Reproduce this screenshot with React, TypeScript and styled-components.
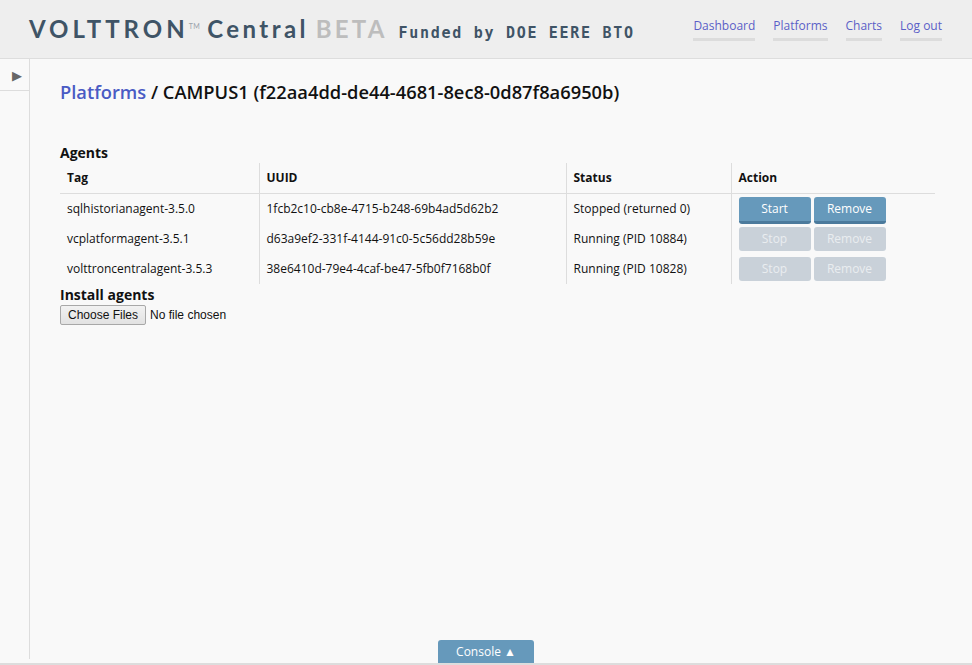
import styled, { createGlobalStyle } from 'styled-components';

const GlobalStyle = createGlobalStyle`
    html, body {
        margin: 0;
        padding: 0;
        height: 100%;
        background: #f9f9f9;
        font-family: "Open Sans", "Liberation Sans", sans-serif;
        color: #111;
        overflow: hidden;
    }
`;

const Page = styled.div`
    display: flex;
    flex-direction: column;
    height: 665px;
`;

const Header = styled.header`
    display: flex;
    justify-content: space-between;
    align-items: flex-start;
    height: 58px;
    padding: 0 30px 0 29px;
    background: #eeeeee;
    border-bottom: 1px solid #dddddd;
    box-sizing: content-box;
`;

const Logo = styled.div`
    display: flex;
    align-items: baseline;
    padding-top: 14px;
    color: #3f5466;
    white-space: nowrap;
`;

const LogoWord = styled.span<{ $muted?: boolean; $wide?: boolean }>`
    font-family: Lato, "Open Sans", sans-serif;
    font-weight: 700;
    font-size: 24px;
    letter-spacing: ${(p) => (p.$wide ? '4px' : p.$muted ? '3.2px' : '3.4px')};
    color: ${(p) => (p.$muted ? '#bdbdbd' : '#3f5466')};
    margin-right: ${(p) => (p.$wide ? '0' : '7px')};
`;

const Trademark = styled.span`
    align-self: flex-start;
    font-family: Lato, sans-serif;
    font-size: 7px;
    letter-spacing: 0.5px;
    color: #9aa3ab;
    margin: 8px 7px 0 0;
`;

const Funded = styled.span`
    font-family: "DejaVu Sans Mono", "Liberation Mono", monospace;
    font-weight: 700;
    font-size: 15px;
    letter-spacing: 1.7px;
    color: #3f5466;
    margin-left: 4px;
`;

const Nav = styled.nav`
    display: flex;
    gap: 18px;
    padding-top: 17px;
`;

const NavLink = styled.a`
    font-size: 12px;
    color: #5b5fc7;
    text-decoration: none;
    padding-bottom: 4px;
    border-bottom: 3px solid #dcdcdc;
    line-height: 17px;
`;

const Body = styled.div`
    display: flex;
    flex: 1;
    min-height: 0;
`;

const Sidebar = styled.aside`
    width: 29px;
    border-right: 1px solid #dddddd;
    margin-bottom: 6px;
`;

const Toggle = styled.div`
    height: 31px;
    border-bottom: 1px solid #dddddd;
    display: flex;
    align-items: center;
    justify-content: center;
    color: #666;
    font-size: 13px;
    padding-left: 4px;
`;

const Content = styled.main`
    flex: 1;
    padding: 20px 37px 0 30px;
`;

const Title = styled.h1`
    margin: 0;
    font-size: 18.3px;
    font-weight: 600;
    line-height: 26px;
    color: #111;
`;

const TitleLink = styled.a`
    color: #4a5bc4;
    text-decoration: none;
`;

const SectionHeading = styled.h3<{ $top: number }>`
    margin: ${(p) => p.$top}px 0 0;
    font-size: 14px;
    font-weight: 700;
    line-height: 19px;
`;

const Table = styled.table`
    width: 100%;
    margin-top: 1px;
    border-collapse: collapse;
    table-layout: fixed;
    font-size: 12px;
`;

const Th = styled.th<{ $w?: number }>`
    box-sizing: border-box;
    text-align: left;
    font-weight: 700;
    height: 30px;
    padding: 0 7px;
    line-height: 17px;
    width: ${(p) => (p.$w ? `${p.$w}px` : 'auto')};
    border-bottom: 1px solid #dddddd;
    border-left: 1px solid #dddddd;
    &:first-child {
        border-left: none;
    }
`;

const Td = styled.td<{ $action?: boolean }>`
    box-sizing: border-box;
    height: 30px;
    padding: 0 7px;
    line-height: 17px;
    border-left: 1px solid #dddddd;
    vertical-align: ${(p) => (p.$action ? 'top' : 'middle')};
    white-space: nowrap;
    &:first-child {
        border-left: none;
    }
`;

const Actions = styled.div`
    display: flex;
    gap: 3px;
    height: 30px;
    padding-top: 3px;
    box-sizing: border-box;
`;

const ActionButton = styled.button<{ $enabled: boolean }>`
    width: 72px;
    height: ${(p) => (p.$enabled ? '27px' : '24px')};
    padding: 0;
    border: none;
    border-bottom: ${(p) => (p.$enabled ? '3px solid #4b7a9c' : 'none')};
    border-radius: 3px;
    background: ${(p) => (p.$enabled ? '#6699bb' : '#c9d1d9')};
    color: ${(p) => (p.$enabled ? '#ffffff' : '#e9edf0')};
    font-family: "Open Sans", sans-serif;
    font-size: 12px;
    line-height: 24px;
    cursor: ${(p) => (p.$enabled ? 'pointer' : 'default')};
`;

const FileRow = styled.div`
    display: flex;
    align-items: center;
    gap: 4px;
    margin-top: 1px;
    font-family: "Liberation Sans", Arial, sans-serif;
    font-size: 12px;
`;

const FileButton = styled.button`
    height: 20px;
    padding: 0 7px;
    border: 1px solid #a8a8a8;
    border-radius: 2px;
    background: linear-gradient(#f2f2f2, #e2e2e2);
    font-family: "Liberation Sans", Arial, sans-serif;
    font-size: 12px;
    color: #111;
`;

const ConsoleButton = styled.button`
    position: fixed;
    bottom: 0;
    left: 50%;
    transform: translateX(-50%);
    width: 96px;
    height: 25px;
    border: none;
    border-radius: 3px 3px 0 0;
    background: #6699bb;
    color: #ffffff;
    font-family: "Open Sans", sans-serif;
    font-size: 12px;
    padding: 0 0 2px;
`;

const BottomBar = styled.div`
    position: fixed;
    left: 0;
    right: 0;
    bottom: 0;
    height: 2px;
    background: #dddddd;
`;

type Agent = {
    tag: string;
    uuid: string;
    status: string;
    running: boolean;
};

const agents: Agent[] = [
    { tag: 'sqlhistorianagent-3.5.0', uuid: '1fcb2c10-cb8e-4715-b248-69b4ad5d62b2', status: 'Stopped (returned 0)', running: false },
    { tag: 'vcplatformagent-3.5.1', uuid: 'd63a9ef2-331f-4144-91c0-5c56dd28b59e', status: 'Running (PID 10884)', running: true },
    { tag: 'volttroncentralagent-3.5.3', uuid: '38e6410d-79e4-4caf-be47-5fb0f7168b0f', status: 'Running (PID 10828)', running: true },
];

export default function App() {
    return (
        <>
            <GlobalStyle />
            <Page>
                <Header>
                    <Logo>
                        <LogoWord $wide>VOLTTRON</LogoWord>
                        <Trademark>TM</Trademark>
                        <LogoWord>Central</LogoWord>
                        <LogoWord $muted>BETA</LogoWord>
                        <Funded>Funded by DOE EERE BTO</Funded>
                    </Logo>
                    <Nav>
                        <NavLink href="#">Dashboard</NavLink>
                        <NavLink href="#">Platforms</NavLink>
                        <NavLink href="#">Charts</NavLink>
                        <NavLink href="#">Log out</NavLink>
                    </Nav>
                </Header>
                <Body>
                    <Sidebar>
                        <Toggle>▶</Toggle>
                    </Sidebar>
                    <Content>
                        <Title>
                            <TitleLink href="#">Platforms</TitleLink> / CAMPUS1 (f22aa4dd-de44-4681-8ec8-0d87f8a6950b)
                        </Title>
                        <SectionHeading $top={38}>Agents</SectionHeading>
                        <Table>
                            <thead>
                                <tr>
                                    <Th $w={199}>Tag</Th>
                                    <Th $w={307}>UUID</Th>
                                    <Th $w={165}>Status</Th>
                                    <Th>Action</Th>
                                </tr>
                            </thead>
                            <tbody>
                                {agents.map((agent) => (
                                    <tr key={agent.uuid}>
                                        <Td>{agent.tag}</Td>
                                        <Td>{agent.uuid}</Td>
                                        <Td>{agent.status}</Td>
                                        <Td $action>
                                            <Actions>
                                                <ActionButton $enabled={!agent.running}>
                                                    {agent.running ? 'Stop' : 'Start'}
                                                </ActionButton>
                                                <ActionButton $enabled={!agent.running}>Remove</ActionButton>
                                            </Actions>
                                        </Td>
                                    </tr>
                                ))}
                            </tbody>
                        </Table>
                        <SectionHeading $top={1}>Install agents</SectionHeading>
                        <FileRow>
                            <FileButton>Choose Files</FileButton>
                            <span>No file chosen</span>
                        </FileRow>
                    </Content>
                </Body>
                <ConsoleButton>Console ▲</ConsoleButton>
                <BottomBar />
            </Page>
        </>
    );
}
